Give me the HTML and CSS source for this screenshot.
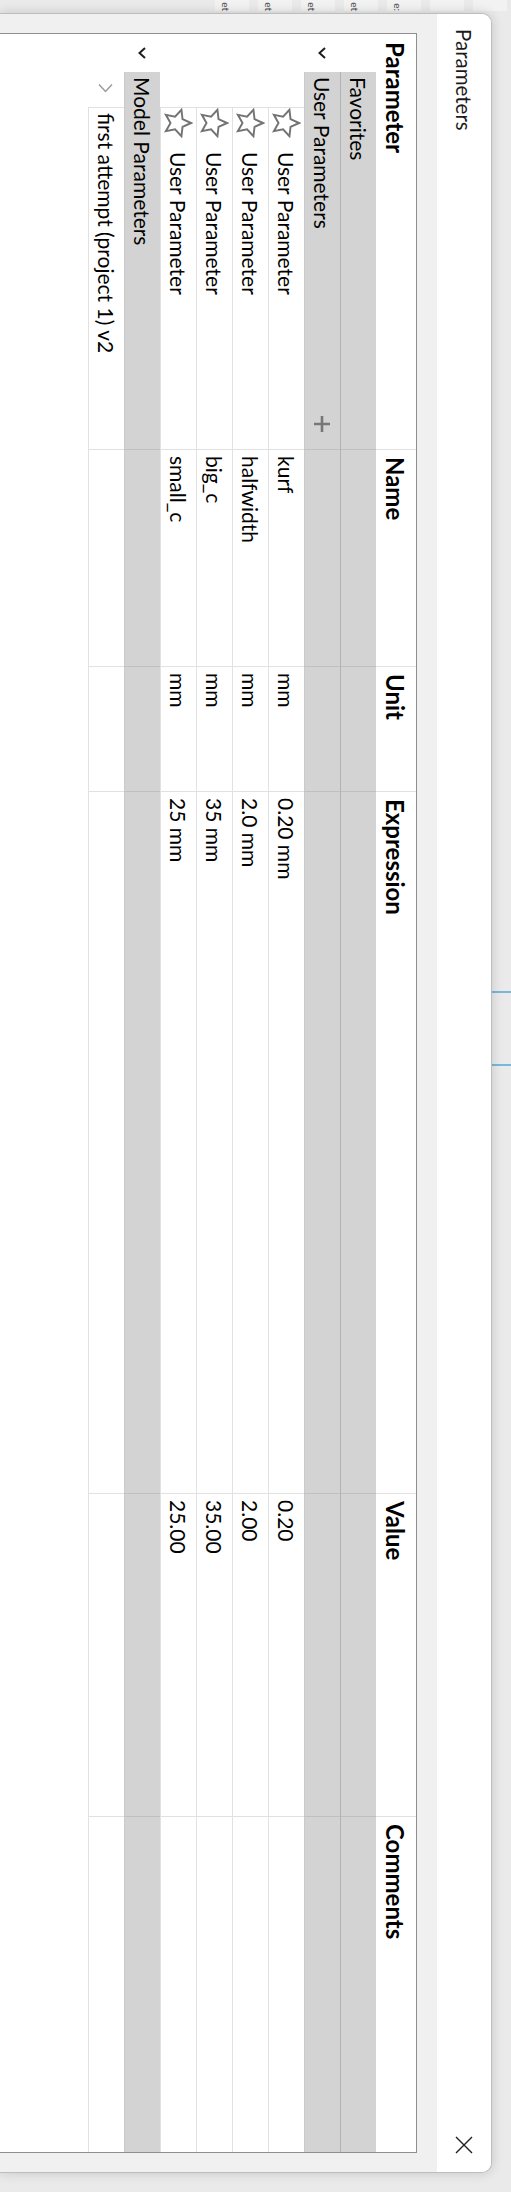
FILE: index.html
```html
<!DOCTYPE html>
<html lang="en">
<head>
<meta charset="utf-8">
<title>Parameters</title>
<link rel="stylesheet" href="styles.css">
</head>
<body>
<div class="stage">
  <div class="app-left">
    <div class="tab"></div>
    <div class="tab"></div>
    <div class="tab"><span>e:</span></div>
    <div class="tab"><span>et</span></div>
    <div class="tab"><span>et</span></div>
    <div class="tab"><span>et</span></div>
    <div class="tab"><span>et</span></div>
  </div>
  <div class="main">
    <div class="top-strip">
      <span class="mark first"></span>
      <span class="mark"></span>
    </div>
    <div class="dialog">
      <div class="titlebar">
        <span class="title">Parameters</span>
        <span class="close">
          <svg width="18" height="18" viewBox="0 0 18 18"><path d="M1 1 L17 17 M17 1 L1 17" stroke="#1e1e1e" stroke-width="1.4" fill="none"/></svg>
        </span>
      </div>
      <div class="body">
        <div class="table">
          <div class="row head">
            <div class="cell first-h">Parameter</div>
            <div class="cell">Name</div>
            <div class="cell">Unit</div>
            <div class="cell">Expression</div>
            <div class="cell">Value</div>
            <div class="cell">Comments</div>
          </div>

          <div class="row group fav">
            <div class="pcell"><span class="indent g"></span><span class="inner">Favorites</span></div>
            <div class="cell"></div><div class="cell"></div><div class="cell"></div><div class="cell"></div><div class="cell"></div>
          </div>

          <div class="row group">
            <div class="pcell"><span class="indent g"><svg class="chev" width="12" height="8" viewBox="0 0 12 8"><polyline points="1,1 6,6.5 11,1" stroke="#1e1e1e" stroke-width="2" fill="none"/></svg></span><span class="inner between">User Parameters<svg width="18" height="18" viewBox="0 0 18 18"><path d="M9 1 V17 M1 9 H17" stroke="#777" stroke-width="2.6" fill="none"/></svg></span></div>
            <div class="cell"></div><div class="cell"></div><div class="cell"></div><div class="cell"></div><div class="cell"></div>
          </div>

          <div class="row child">
            <div class="pcell"><span class="indent c"></span><span class="inner star-in"><svg class="star" width="30" height="30" viewBox="0 0 28 28"><polygon points="14,1.8 17.65,9.78 26.36,10.78 19.9,16.72 21.64,25.32 14,21 6.36,25.32 8.1,16.72 1.64,10.78 10.35,9.78" stroke="#737373" stroke-width="1.8" fill="none" stroke-linejoin="miter"/></svg>User Parameter</span></div>
            <div class="cell">kurf</div><div class="cell">mm</div><div class="cell">0.20 mm</div><div class="cell">0.20</div><div class="cell"></div>
          </div>

          <div class="row child">
            <div class="pcell"><span class="indent c"></span><span class="inner star-in"><svg class="star" width="30" height="30" viewBox="0 0 28 28"><polygon points="14,1.8 17.65,9.78 26.36,10.78 19.9,16.72 21.64,25.32 14,21 6.36,25.32 8.1,16.72 1.64,10.78 10.35,9.78" stroke="#737373" stroke-width="1.8" fill="none" stroke-linejoin="miter"/></svg>User Parameter</span></div>
            <div class="cell">halfwidth</div><div class="cell">mm</div><div class="cell">2.0 mm</div><div class="cell">2.00</div><div class="cell"></div>
          </div>

          <div class="row child">
            <div class="pcell"><span class="indent c"></span><span class="inner star-in"><svg class="star" width="30" height="30" viewBox="0 0 28 28"><polygon points="14,1.8 17.65,9.78 26.36,10.78 19.9,16.72 21.64,25.32 14,21 6.36,25.32 8.1,16.72 1.64,10.78 10.35,9.78" stroke="#737373" stroke-width="1.8" fill="none" stroke-linejoin="miter"/></svg>User Parameter</span></div>
            <div class="cell">big_c</div><div class="cell">mm</div><div class="cell">35 mm</div><div class="cell">35.00</div><div class="cell"></div>
          </div>

          <div class="row child">
            <div class="pcell"><span class="indent c"></span><span class="inner star-in"><svg class="star" width="30" height="30" viewBox="0 0 28 28"><polygon points="14,1.8 17.65,9.78 26.36,10.78 19.9,16.72 21.64,25.32 14,21 6.36,25.32 8.1,16.72 1.64,10.78 10.35,9.78" stroke="#737373" stroke-width="1.8" fill="none" stroke-linejoin="miter"/></svg>User Parameter</span></div>
            <div class="cell">small_c</div><div class="cell">mm</div><div class="cell">25 mm</div><div class="cell">25.00</div><div class="cell"></div>
          </div>

          <div class="row group">
            <div class="pcell"><span class="indent g"><svg class="chev" width="12" height="8" viewBox="0 0 12 8"><polyline points="1,1 6,6.5 11,1" stroke="#1e1e1e" stroke-width="2" fill="none"/></svg></span><span class="inner">Model Parameters</span></div>
            <div class="cell"></div><div class="cell"></div><div class="cell"></div><div class="cell"></div><div class="cell"></div>
          </div>

          <div class="row child">
            <div class="pcell"><span class="indent c"><svg class="chev-r" width="10" height="15" viewBox="0 0 10 15"><polyline points="1.5,1 8.5,7.5 1.5,14" stroke="#9c9c9c" stroke-width="1.5" fill="none"/></svg></span><span class="inner plain">first attempt (project 1) v2</span></div>
            <div class="cell"></div><div class="cell"></div><div class="cell"></div><div class="cell"></div><div class="cell"></div>
          </div>
        </div>
      </div>
    </div>
  </div>
</div>
</body>
</html>
```
FILE: styles.css
```css
html, body {
  margin: 0;
  padding: 0;
}
body {
  width: 511px;
  height: 2192px;
  overflow: hidden;
  background: #ebebeb;
  position: relative;
  font-family: Lato, "Noto Sans", sans-serif;
  color: #000;
}
.stage {
  position: absolute;
  left: 0;
  top: 0;
  width: 2192px;
  height: 511px;
  transform-origin: 0 0;
  transform: translateX(511px) rotate(90deg);
  display: flex;
  background: #eaeaea;
  overflow: hidden;
}
.app-left {
  width: 13px;
  flex: none;
  display: flex;
  flex-direction: column;
  gap: 9px;
  padding-top: 4px;
  box-sizing: border-box;
}
.tab {
  width: 11px;
  height: 34px;
  background: #f2f2f2;
  overflow: hidden;
  display: flex;
  justify-content: flex-end;
  align-items: flex-end;
  font-size: 10px;
  color: #4a4a4a;
  line-height: 12px;
}
.tab span {
  white-space: nowrap;
  padding-bottom: 5px;
}
.main {
  flex: 1;
  display: flex;
  flex-direction: column;
  min-width: 0;
}
.top-strip {
  height: 19px;
  flex: none;
  display: flex;
  gap: 71px;
}
.mark {
  width: 2px;
  height: 19px;
  background: #79b7dc;
}
.mark.first {
  margin-left: 978px;
}
.dialog {
  flex: 1;
  margin-right: 19px;
  display: flex;
  flex-direction: column;
  background: #f0f0f0;
  border: 1px solid #bdbdbd;
  border-bottom: none;
  border-radius: 10px 10px 0 0;
  box-shadow: 0 0 12px rgba(0, 0, 0, 0.16);
  overflow: hidden;
}
.titlebar {
  height: 54px;
  flex: none;
  background: #fff;
  display: flex;
  align-items: center;
  justify-content: space-between;
  padding: 0 18px 0 15px;
}
.title {
  font-size: 20.5px;
  color: #1b1b1b;
}
.close {
  display: flex;
  width: 18px;
  height: 18px;
}
.body {
  flex: 1;
  display: flex;
  padding: 20px 19px 0 19px;
}
.table {
  flex: 1;
  background: #fff;
  border: 1px solid #8e8e8e;
  border-bottom: none;
  display: flex;
  flex-direction: column;
}
.row {
  display: grid;
  grid-template-columns: 416px 217px 125px 702px 323px 1fr;
  height: 36px;
  flex: none;
}
.cell {
  border-right: 1px solid #e1e1e1;
  border-bottom: 1px solid #e1e1e1;
  display: flex;
  align-items: center;
  padding-left: 6px;
  font-size: 21px;
  white-space: nowrap;
  overflow: hidden;
}
.row .cell:last-child {
  border-right: none;
}
.head {
  height: 40px;
}
.head .cell {
  font-weight: 700;
  font-size: 24px;
  border-bottom: none;
  padding-left: 7px;
}
.head .cell.first-h {
  padding-left: 8px;
}
.pcell {
  display: flex;
  min-width: 0;
}
.indent {
  flex: none;
  display: flex;
  align-items: center;
  background: #fff;
}
.indent.g {
  width: 38px;
  padding-left: 13px;
  box-sizing: border-box;
}
.indent.c {
  width: 73px;
  padding-left: 49px;
  box-sizing: border-box;
}
.inner {
  flex: 1;
  display: flex;
  align-items: center;
  font-size: 21px;
  white-space: nowrap;
  border-right: 1px solid #e1e1e1;
  border-bottom: 1px solid #e1e1e1;
  min-width: 0;
}
.group .inner,
.group .cell {
  background: #d3d3d3;
  border-right-color: #c0c0c0;
  border-bottom-color: #cacaca;
}
.group .inner {
  padding-left: 5px;
}
.fav .inner,
.fav .cell {
  border-bottom-color: #b3b3b3;
}
.between {
  justify-content: space-between;
  padding-right: 16px;
}
.child .inner {
  border-left: 1px solid #e1e1e1;
}
.star-in .star {
  flex: none;
  margin-right: 14px;
}
.plain {
  padding-left: 5px;
}
```
